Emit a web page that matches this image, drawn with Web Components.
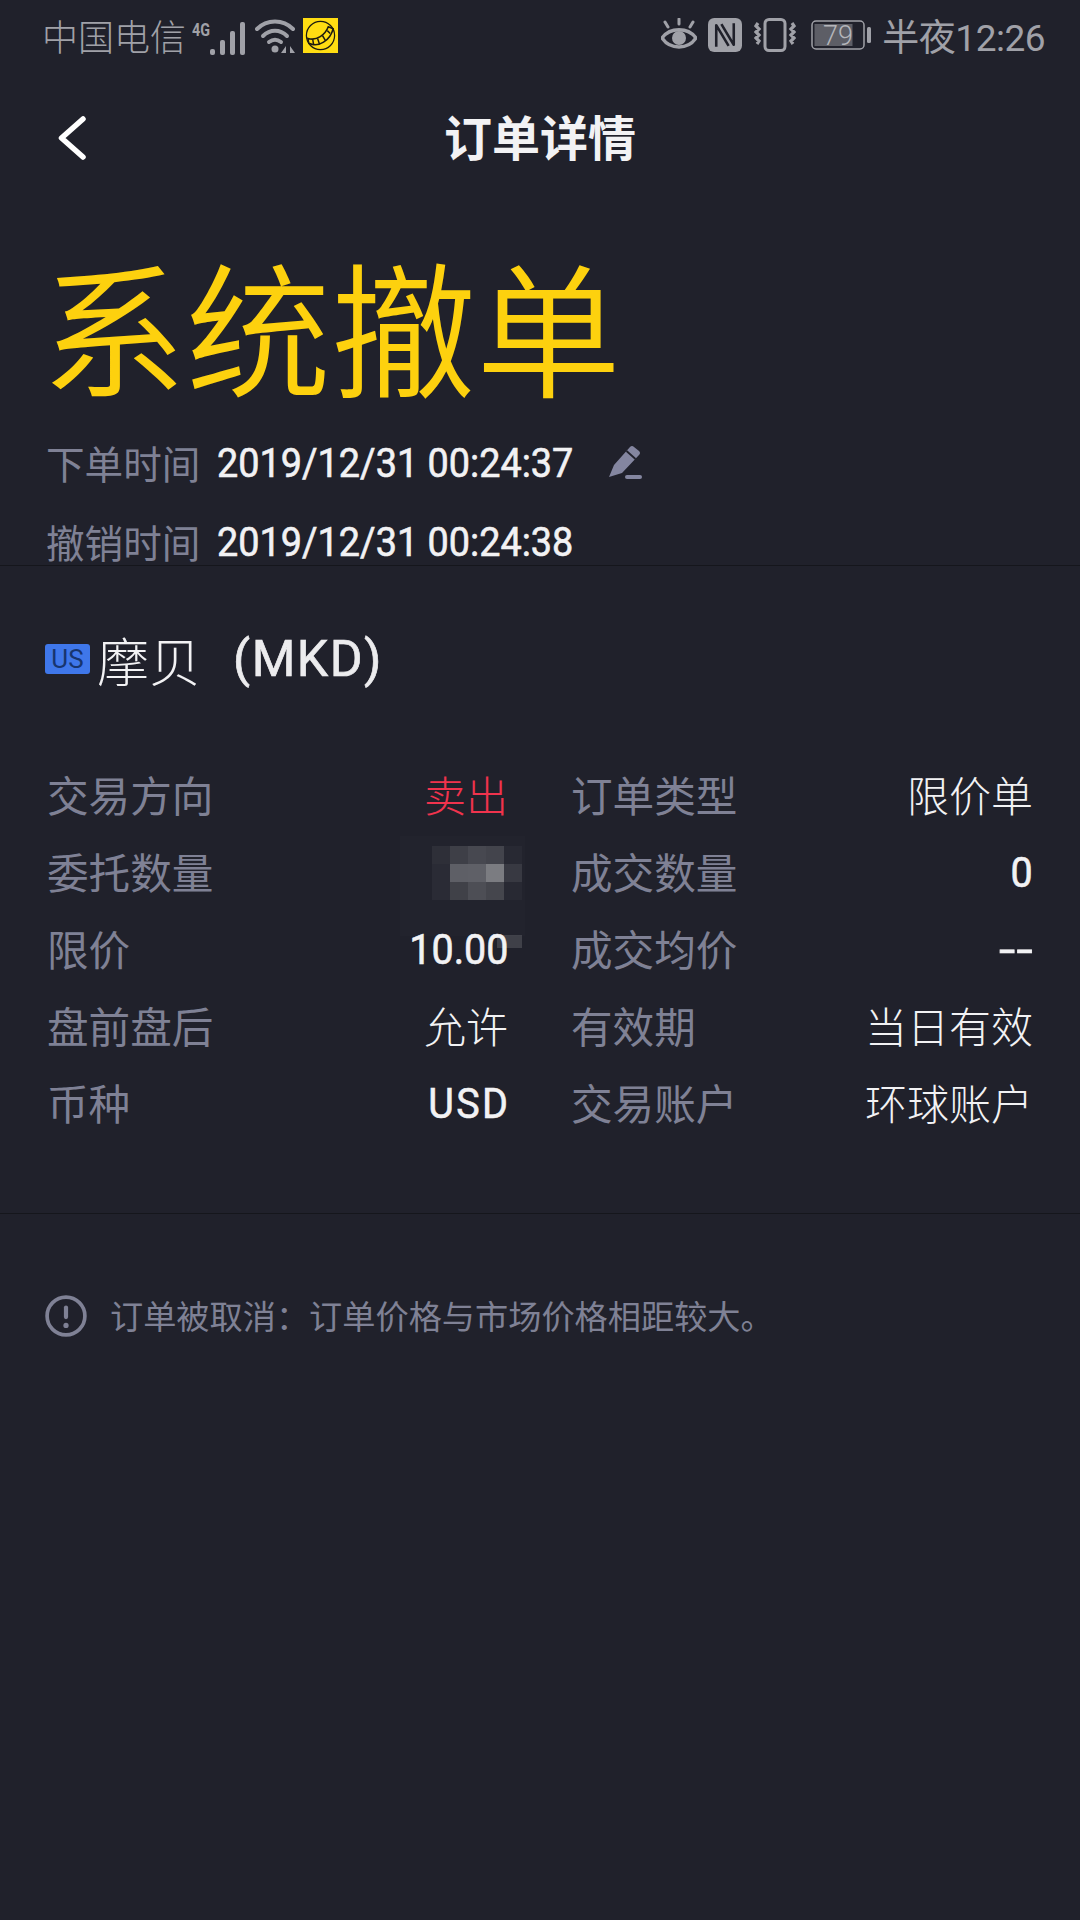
<!DOCTYPE html>
<html lang="zh-CN"><head><meta charset="utf-8">
<style>
html,body{margin:0;padding:0;background:#20212b}
body{width:1080px;height:1920px;overflow:hidden;font-family:Roboto,"Noto Sans CJK SC",sans-serif;color:#f0f0f2;text-spacing-trim:space-all}
</style></head><body>
<order-page></order-page>
<template id="t-status">
<style>
:host{display:flex;box-sizing:border-box;height:74px;padding:0 35px 4px 42px;align-items:center;justify-content:space-between;color:#a0a1a8;font-size:36px;font-family:"Noto Sans CJK SC",sans-serif;font-weight:300}
.g{display:flex;align-items:center}
svg{display:block;flex:none}
.time{font-family:Roboto,"Noto Sans CJK SC",sans-serif;font-size:37px;font-weight:400;letter-spacing:-.5px}
</style>
<div class="g">
<span>中国电信</span>
<svg width="60" height="43" viewBox="0 -3 60 43" style="margin-left:6px;margin-top:7px"><text x="0" y="16" font-family="Roboto" font-weight="700" font-size="19" fill="#a0a1a8" textLength="18" lengthAdjust="spacingAndGlyphs">4G</text>
<g fill="#a0a1a8"><rect x="18" y="29" width="5" height="6" rx="2"/><rect x="28" y="20" width="5" height="15" rx="2"/><rect x="38" y="11" width="5" height="24" rx="2"/><rect x="48" y="2" width="5" height="33" rx="2"/></g></svg>
<svg width="42" height="36" viewBox="0 0 42 36" style="margin-left:3px;margin-top:4px"><g fill="none" stroke="#a0a1a8" stroke-width="4" stroke-linecap="round"><path d="M2 10C12 0 28 0 38 10"/><path d="M8 17C15 10 25 10 32 17"/><path d="M14 23C18 20 22 20 26 23"/></g><circle cx="20" cy="30" r="3.500" fill="#a0a1a8"/><path fill="#a0a1a8" d="M31 27v7h-5zM35 27l5 7h-5z"/></svg>
<svg width="35" height="35" viewBox="0 0 36 36" style="margin-left:6px"><rect width="36" height="36" fill="#ffdd12"/><circle cx="18" cy="18" r="14.500" fill="none" stroke="#1c1b10" stroke-width="1.300"/><path d="M5 21C14 24 23 17 26 9L31 11C28 23 16 31 6 26Z" fill="none" stroke="#1c1b10" stroke-width="1.600"/><path d="M10 22l1 6M15 21l2 6M20 18l3 5M25 13l3 3" stroke="#1c1b10" stroke-width="1.500"/></svg>
</div>
<div class="g">
<svg width="36" height="34" viewBox="0 0 36 34"><path d="M1 20C9 9 27 9 35 20C27 32 9 32 1 20Z" fill="none" stroke="#a0a1a8" stroke-width="3.400"/><circle cx="18" cy="20" r="7" fill="#a0a1a8"/><path d="M7 9L4 4M18 6V1M29 9l3-5" stroke="#a0a1a8" stroke-width="3" stroke-linecap="round"/></svg>
<svg width="34" height="34" viewBox="0 0 33 33" style="margin-left:11px"><rect width="33" height="33" rx="6" fill="#a0a1a8"/><path d="M8 28V7L20 27M25 5V26L13 6" fill="none" stroke="#20212b" stroke-width="2.500" stroke-linejoin="round"/></svg>
<svg width="42" height="34" viewBox="0 0 42 34" style="margin-left:12px"><rect x="11" y="1.500" width="20" height="31" rx="4" fill="none" stroke="#a0a1a8" stroke-width="3"/><path d="M4 5l-2 3 3 3-3 3 3 3-3 3 3 3-2 3M38 5l2 3-3 3 3 3-3 3 3 3-3 3 2 3" fill="none" stroke="#a0a1a8" stroke-width="3.200"/></svg>
<svg width="62" height="36" viewBox="0 -3 62 36" style="margin-left:15px"><rect x="1" y="1" width="52" height="28" rx="4" fill="none" stroke="#a0a1a8" stroke-width="1.500"/><rect x="3.500" y="4" width="38" height="22" fill="#5d5e66"/><rect x="56" y="7" width="4" height="16" rx="1.500" fill="#a0a1a8"/><text x="27" y="25" text-anchor="middle" font-family="Roboto" font-size="27" fill="#b5b6bb" font-weight="300">79</text></svg>
<span class="time" style="margin-left:9px">半夜12:26</span>
</div>
</template>
<template id="t-nav">
<style>
:host{display:flex;position:relative;box-sizing:border-box;height:60px;padding-bottom:6px;margin-top:34px;align-items:center;justify-content:center;font:700 48px "Noto Sans CJK SC",sans-serif;color:#f2f2f4}
svg{position:absolute;left:58px;top:8px}
</style>
<svg width="30" height="44" viewBox="0 0 30 44"><path d="M25 3L3.500 22L25 41" fill="none" stroke="#fff" stroke-width="5.500" stroke-linecap="round" stroke-linejoin="round"/></svg>
<slot></slot>
</template>
<template id="t-head">
<style>
:host{display:block;box-sizing:border-box;height:398px;padding:71px 0 0 41px;border-bottom:1px solid #15161c}
h1{margin:0 0 13px;font:350 145px/170px "Noto Sans CJK SC",sans-serif;color:#fdd10e;height:170px;white-space:nowrap}
.r{display:flex;align-items:center;height:79px;padding-left:5px}
.l{font:400 38.600px "Noto Sans CJK SC",sans-serif;color:#7f8195;width:171px;flex:none}
.v{display:inline-block;width:355px;flex:none;font:400 40px Roboto,sans-serif;-webkit-text-stroke:.6px #f2f2f4;color:#f2f2f4;transform:translateY(2px) scaleX(.945);transform-origin:left center;white-space:nowrap}
svg{flex:none;margin-left:35px}
</style>
<h1>系统撤单</h1>
<div class="r"><span class="l">下单时间</span><span class="v">2019/12/31 00:24:37</span>
<svg width="36" height="36" viewBox="0 0 36 36"><path fill="#8486a0" d="M2 33L7 21L23 3Q25 1 27 3L32 7Q34 9 32 11L15 29Z"/><path d="M19.500 7L28.500 15" stroke="#20212b" stroke-width="1.800"/><rect x="18" y="31" width="17" height="4" rx="2" fill="#8486a0"/></svg></div>
<div class="r"><span class="l">撤销时间</span><span class="v">2019/12/31 00:24:38</span></div>
</template>
<template id="t-name">
<style>
:host{display:flex;align-items:center;height:186px;box-sizing:border-box;padding:0 0 0 45px;white-space:nowrap}
.b{background:#3f77ea;color:#17356e;font:400 26px/30px Roboto,sans-serif;width:45px;height:30px;border-radius:3px;text-align:center;flex:none}
.n{font:300 52px "Noto Sans CJK SC",sans-serif;color:#f2f2f4;margin-left:7px}
.m{font:400 50px Roboto,sans-serif;-webkit-text-stroke:.7px #ececee;color:#ececee;letter-spacing:1.500px;margin-left:32px}
</style>
<span class="b">US</span><span class="n">摩贝</span><span class="m">(MKD)</span>
</template>
<template id="t-grid">
<style>
:host{display:block;position:relative;box-sizing:border-box;height:462px;padding:3px 47px 0;border-bottom:1px solid #15161c}
.grid{display:grid;grid-template-columns:461px 1fr;column-gap:63px;grid-auto-rows:77px}
.mos{position:absolute;left:432px;top:94px;display:grid;grid-template-columns:repeat(5,18px);grid-auto-rows:18px}
.mos2{position:absolute;left:497px;top:183px;width:25px;height:13px;background:rgba(255,255,255,.14)}
.mos3{position:absolute;left:400px;top:84px;width:125px;height:100px;background:rgba(255,255,255,.01)}
</style>
<div class="mos3"></div>
<div class="grid"><slot></slot></div>
<div class="mos" id="mos"></div>
<div class="mos2"></div>
</template>
<template id="t-row">
<style>
:host{display:flex;justify-content:space-between;align-items:center;font:400 41.600px "Noto Sans CJK SC",sans-serif;white-space:nowrap}
.l{color:#7f8195}
.v{display:inline-block;color:#f2f2f4;font:400 42px Roboto,sans-serif;-webkit-text-stroke:.6px #f2f2f4;transform:translateY(2px) scaleX(.94);transform-origin:right center}
.v.cjk{font:300 42px "Noto Sans CJK SC",sans-serif;-webkit-text-stroke:0;transform:none}
.v.red{color:#f0334d}
.v.caps{letter-spacing:2.500px;margin-right:-2px}
.v.dash{letter-spacing:1px;transform:translateY(2px) scaleX(1.4);margin-right:-1px}
</style>
<span class="l" id="l"></span><span class="v" id="v"></span>
</template>
<template id="t-note">
<style>
:host{display:flex;align-items:center;padding:76px 0 0 45px;font:400 33.200px "Noto Sans CJK SC",sans-serif;color:#7f8195;white-space:nowrap;text-spacing-trim:space-all}
svg{flex:none;margin-right:23px;position:relative;top:1px}
</style>
<svg width="42" height="42" viewBox="0 0 40 40"><circle cx="20" cy="20" r="18" fill="none" stroke="#7f8195" stroke-width="3.500"/><rect x="18" y="10" width="4" height="13" rx="2" fill="#7f8195"/><circle cx="20" cy="29" r="2.500" fill="#7f8195"/></svg>
<slot></slot>
</template>
<script>
function mk(name,id,init){customElements.define(name,class extends HTMLElement{constructor(){super();const s=this.attachShadow({mode:'open'});s.appendChild(document.getElementById(id).content.cloneNode(true));}connectedCallback(){if(init)init.call(this,this.shadowRoot)}})}
mk('status-bar','t-status');
mk('nav-bar','t-nav');
mk('order-head','t-head');
mk('stock-name','t-name');
mk('info-row','t-row',function(s){s.getElementById('l').textContent=this.getAttribute('label');const v=s.getElementById('v');const t=this.getAttribute('value');v.textContent=t;if(/[^\x00-\x7f]/.test(t))v.classList.add('cjk');if(t==='USD')v.classList.add('caps');if(t==='--')v.classList.add('dash');if(this.hasAttribute('red'))v.classList.add('red')});
mk('info-grid','t-grid',function(s){
 const c=['#2e2f38','#3e3f47','#474850','#43444c','#282933','#2a2b35','#5e5f66','#5f6067','#7b7c81','#383942','#2a2b35','#404148','#4d4e55','#45464d','#282933'];
 const m=s.getElementById('mos');
 c.forEach(x=>{const d=document.createElement('div');d.style.background=x;m.appendChild(d)});
});
mk('order-note','t-note');
customElements.define('order-page',class extends HTMLElement{constructor(){super();const s=this.attachShadow({mode:'open'});s.innerHTML=`<style>:host{display:block;width:1080px;height:1920px;background:#20212b}</style>
<status-bar></status-bar><nav-bar>订单详情</nav-bar><order-head></order-head><stock-name></stock-name>
<info-grid>
<info-row label="交易方向" value="卖出" red></info-row><info-row label="订单类型" value="限价单"></info-row>
<info-row label="委托数量" value=""></info-row><info-row label="成交数量" value="0"></info-row>
<info-row label="限价" value="10.00"></info-row><info-row label="成交均价" value="--"></info-row>
<info-row label="盘前盘后" value="允许"></info-row><info-row label="有效期" value="当日有效"></info-row>
<info-row label="币种" value="USD"></info-row><info-row label="交易账户" value="环球账户"></info-row>
</info-grid><order-note>订单被取消：订单价格与市场价格相距较大。</order-note>`}});
</script>
</body></html>
